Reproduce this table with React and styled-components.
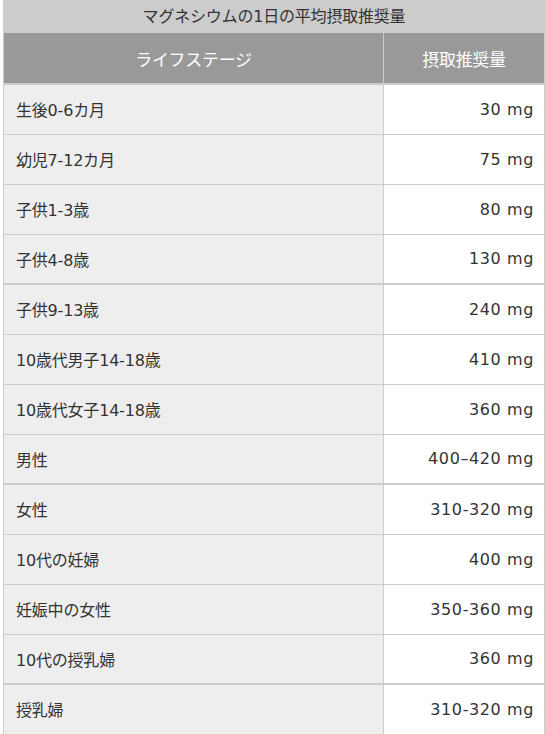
import React from 'react'
import styled, { createGlobalStyle } from 'styled-components'

const rows = [
  ['生後0-6カ月', '30 mg'],
  ['幼児7-12カ月', '75 mg'],
  ['子供1-3歳', '80 mg'],
  ['子供4-8歳', '130 mg', true],
  ['子供9-13歳', '240 mg'],
  ['10歳代男子14-18歳', '410 mg'],
  ['10歳代女子14-18歳', '360 mg'],
  ['男性', '400–420 mg', true],
  ['女性', '310-320 mg'],
  ['10代の妊婦', '400 mg'],
  ['妊娠中の女性', '350-360 mg'],
  ['10代の授乳婦', '360 mg', true],
  ['授乳婦', '310-320 mg'],
]

export default function App() {
  return (
    <>
      <Global />
      <Page>
        <Table>
          <Caption>マグネシウムの1日の平均摂取推奨量</Caption>
          <thead>
            <tr>
              <Th $w={379}>ライフステージ</Th>
              <Th>摂取推奨量</Th>
            </tr>
          </thead>
          <tbody>
            {rows.map(([stage, amount, sep]) => (
              <Row key={stage} $sep={sep}>
                <Stage>{stage}</Stage>
                <Amount>{amount}</Amount>
              </Row>
            ))}
          </tbody>
        </Table>
      </Page>
    </>
  )
}

const Global = createGlobalStyle`
body{
  margin:0;
  background:#fff;
  font-family:"DejaVu Sans","Noto Sans CJK JP",sans-serif;
  color:#333;
}
`

const Page = styled.div`
  padding:0 0 0 3px;
  width:545px;
  box-sizing:border-box;
  overflow:hidden;
`

const Table = styled.table`
  width:542px;
  border-collapse:collapse;
  table-layout:fixed;
`

const Caption = styled.caption`
  background:#ccc;
  color:#333;
  font-size:16px;
  height:33px;
  line-height:33px;
  text-align:center;
  letter-spacing:-0.2px;
`

const Th = styled.th`
  width:${p => (p.$w ? p.$w + 'px' : 'auto')};
  background:#999;
  color:#fff;
  font-weight:normal;
  font-size:17px;
  height:50px;
  padding:0;
  border:1px solid #ccc;
  border-top:none;
  border-bottom:2px solid #ccc;
  letter-spacing:-0.3px;
`

const Row = styled.tr`
  td{
    border-bottom:${p => (p.$sep ? '2px' : '1px')} solid #ccc;
  }
`

const Cell = styled.td`
  height:50px;
  padding:0 10px 0 12px;
  font-size:16px;
  border-left:1px solid #ccc;
  border-right:1px solid #ccc;
  box-sizing:border-box;
  letter-spacing:-0.2px;
`

const Stage = styled(Cell)`
  background:#eee;
  text-align:left;
`

const Amount = styled(Cell)`
  background:#fff;
  text-align:right;
  letter-spacing:0.6px;
`
